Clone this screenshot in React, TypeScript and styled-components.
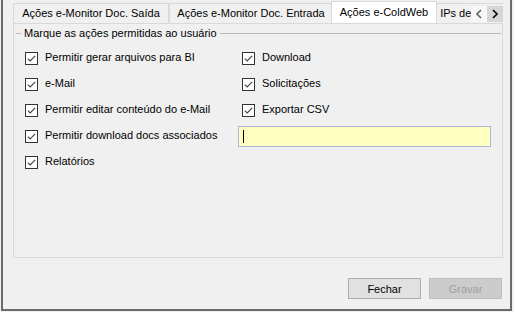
import React from "react";
import styled, { createGlobalStyle } from "styled-components";

const GlobalStyle = createGlobalStyle`
  html, body {
    margin: 0;
    padding: 0;
    background: #f0f0f0;
  }
  * {
    box-sizing: border-box;
  }
`;

const leftItems = [
  "Permitir gerar arquivos para BI",
  "e-Mail",
  "Permitir editar conteúdo do e-Mail",
  "Permitir download docs associados",
  "Relatórios",
];

const rightItems = ["Download", "Solicitações", "Exportar CSV"];

const tabs = [
  { label: "Ações e-Monitor Doc. Saída", width: 156 },
  { label: "Ações e-Monitor Doc. Entrada", width: 164 },
  { label: "Ações e-ColdWeb", width: 106, active: true },
  { label: "IPs de Acesso", width: 80 },
];

const CheckIcon = () => (
  <svg width="13" height="13" viewBox="0 0 13 13">
    <rect x="0.5" y="0.5" width="12" height="12" fill="#ffffff" stroke="#333333" />
    <path d="M2.8 6.6 L5.2 9 L10.2 3.8" fill="none" stroke="#404040" strokeWidth="1.1" />
  </svg>
);

const Chevron = ({ dir, color }: { dir: "left" | "right"; color: string }) => (
  <svg width="8" height="10" viewBox="0 0 8 10">
    <path
      d={dir === "left" ? "M6 1 L2 5 L6 9" : "M2 1 L6 5 L2 9"}
      fill="none"
      stroke={color}
      strokeWidth="1.6"
    />
  </svg>
);

const CheckItem = ({ label, right }: { label: string; right?: boolean }) => (
  <CheckRow $right={right}>
    <CheckIcon />
    <CheckLabel>{label}</CheckLabel>
  </CheckRow>
);

export default function App() {
  return (
    <>
      <GlobalStyle />
      <Frame>
        <Window>
          <TabControl>
            <TabStrip>
              {tabs.map((t) => (
                <Tab key={t.label} $width={t.width} $active={!!t.active}>
                  {t.label}
                </Tab>
              ))}
              <Scroller>
                <ScrollButton>
                  <Chevron dir="left" color="#606060" />
                </ScrollButton>
                <ScrollButton $hover>
                  <Chevron dir="right" color="#000000" />
                </ScrollButton>
              </Scroller>
            </TabStrip>
            <TabPage>
              <GroupHeader>
                <GroupLine $short />
                <GroupTitle>Marque as ações permitidas ao usuário</GroupTitle>
                <GroupLine />
              </GroupHeader>
              <OptionsGrid>
                <Column>
                  {leftItems.map((l) => (
                    <CheckItem key={l} label={l} />
                  ))}
                </Column>
                <Column>
                  {rightItems.map((l) => (
                    <CheckItem key={l} label={l} right />
                  ))}
                  <InputRow>
                    <YellowInput>
                      <Caret />
                    </YellowInput>
                  </InputRow>
                </Column>
              </OptionsGrid>
            </TabPage>
          </TabControl>
          <ButtonBar>
            <DialogButton>Fechar</DialogButton>
            <DialogButton $disabled>Gravar</DialogButton>
          </ButtonBar>
        </Window>
      </Frame>
    </>
  );
}

const Frame = styled.div`
  width: 514px;
  height: 312px;
  padding: 0 2px 1px 1px;
  font-family: "Liberation Sans", Arial, sans-serif;
  font-size: 11px;
  color: #000000;
`;

const Window = styled.div`
  height: 100%;
  border: 2px solid #6b6b6b;
  border-top: none;
  display: flex;
  flex-direction: column;
  background: #f0f0f0;
`;

const TabControl = styled.div`
  width: 490px;
  margin: 1px 0 0 10px;
  display: flex;
  flex-direction: column;
`;

const TabStrip = styled.div`
  position: relative;
  z-index: 1;
  height: 22px;
  display: flex;
  align-items: flex-end;
  overflow: hidden;
`;

const Tab = styled.div<{ $width: number; $active: boolean }>`
  flex: none;
  width: ${(p) => p.$width}px;
  height: ${(p) => (p.$active ? 23 : 20)}px;
  margin: ${(p) => (p.$active ? "0 -2px -1px -2px" : "0")};
  position: relative;
  z-index: ${(p) => (p.$active ? 2 : 1)};
  background: ${(p) => (p.$active ? "#ffffff" : "#f0f0f0")};
  border: 1px solid #d9d9d9;
  border-bottom: none;
  display: flex;
  align-items: center;
  justify-content: center;
  padding-bottom: ${(p) => (p.$active ? 3 : 1)}px;
  white-space: nowrap;
  overflow: hidden;
`;

const Scroller = styled.div`
  position: absolute;
  right: 0;
  top: 5px;
  z-index: 3;
  display: flex;
  height: 16px;
`;

const ScrollButton = styled.div<{ $hover?: boolean }>`
  width: 16px;
  height: 16px;
  display: flex;
  align-items: center;
  justify-content: center;
  background: ${(p) => (p.$hover ? "#d6d6d6" : "#f7f7f7")};
`;

const TabPage = styled.div`
  position: relative;
  z-index: 0;
  height: 235px;
  border: 1px solid #d9d9d9;
  background: #f0f0f0;
  display: flex;
  flex-direction: column;
`;

const GroupHeader = styled.div`
  display: flex;
  align-items: center;
  height: 16px;
  margin: 1px 1px 0 2px;
`;

const GroupLine = styled.div<{ $short?: boolean }>`
  height: 1px;
  background: #b9b9b9;
  flex: ${(p) => (p.$short ? "none" : "1")};
  width: ${(p) => (p.$short ? "5px" : "auto")};
`;

const GroupTitle = styled.span`
  padding: 0 3px;
  white-space: nowrap;
  line-height: 16px;
`;

const OptionsGrid = styled.div`
  display: grid;
  grid-template-columns: 213px 253px;
  margin: 4px 0 0 11px;
`;

const Column = styled.div`
  display: flex;
  flex-direction: column;
`;

const CheckRow = styled.div<{ $right?: boolean }>`
  height: 26px;
  display: flex;
  align-items: center;
  gap: 7px;
  padding-left: ${(p) => (p.$right ? 4 : 0)}px;
`;

const CheckLabel = styled.span`
  white-space: nowrap;
  line-height: 16px;
  margin-top: -3px;
`;

const InputRow = styled.div`
  height: 26px;
  display: flex;
  align-items: center;
`;

const YellowInput = styled.div`
  width: 253px;
  height: 21px;
  border: 1px solid #a9b8d6;
  background: #ffffc0;
  display: flex;
  align-items: center;
  padding-left: 4px;
`;

const Caret = styled.div`
  width: 1px;
  height: 13px;
  background: #000000;
`;

const ButtonBar = styled.div`
  display: flex;
  justify-content: flex-end;
  gap: 8px;
  margin-top: 20px;
  padding-right: 8px;
`;

const DialogButton = styled.div<{ $disabled?: boolean }>`
  width: 73px;
  height: 21px;
  display: flex;
  align-items: center;
  justify-content: center;
  background: ${(p) => (p.$disabled ? "#cccccc" : "#e1e1e1")};
  border: 1px solid ${(p) => (p.$disabled ? "#bfbfbf" : "#adadad")};
  color: ${(p) => (p.$disabled ? "#a0a0a0" : "#000000")};
`;
